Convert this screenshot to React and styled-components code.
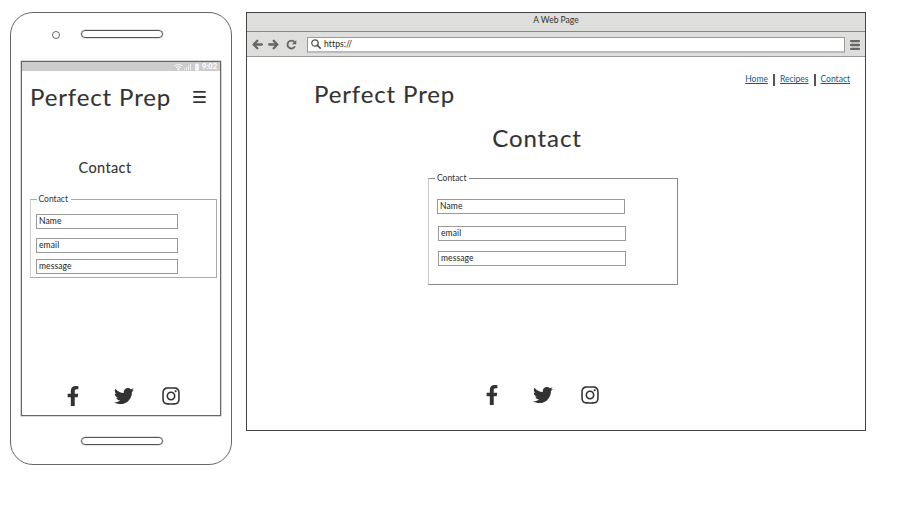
import React from "react";
import styled, { createGlobalStyle } from "styled-components";
import { FaFacebookF, FaTwitter, FaInstagram } from "react-icons/fa";

const GlobalStyle = createGlobalStyle`
  * { box-sizing: border-box; }
  body {
    margin: 0;
    background: #fff;
    color: #333;
    font-family: Lato, "Liberation Sans", sans-serif;
  }
  svg { display: block; flex: none; }
`;

const Page = styled.main`
  width: 912px;
  height: 511px;
  padding: 12px 0 0 10px;
  display: flex;
  align-items: flex-start;
  gap: 14px;
  overflow: hidden;
`;

const Phone = styled.section`
  width: 222px;
  height: 453px;
  border: 1px solid #666;
  border-radius: 23px;
  display: flex;
  flex-direction: column;
  padding: 0 10px;
`;

const PhoneTop = styled.div`
  height: 48px;
  padding: 17px 0 0 31px;
  display: flex;
  align-items: flex-start;
  gap: 20px;
`;

const Camera = styled.span`
  width: 8px;
  height: 8px;
  margin-top: 1px;
  margin-right: 1px;
  border: 1.4px solid #666;
  border-radius: 50%;
`;

const Slot = styled.span`
  width: 82px;
  height: 8px;
  border: 1px solid #555;
  border-radius: 4px;
  box-shadow: 0 0 0 0.3px #888;
`;

const BottomSlot = styled(Slot)`
  margin-left: 1px;
`;

const Screen = styled.div`
  height: 355px;
  border: 1px solid #666;
  box-shadow: 0 0 0 0.4px #999;
  display: flex;
  flex-direction: column;
`;

const StatusBar = styled.div`
  height: 9px;
  flex: none;
  background: #ccc;
  display: flex;
  justify-content: flex-end;
  align-items: center;
  padding-right: 3px;
  gap: 2px;
  color: #fff;
  font-size: 7.5px;
  line-height: 9px;
  font-weight: 900;
`;

const PhoneHeader = styled.header`
  display: flex;
  justify-content: space-between;
  align-items: center;
  height: 34px;
  margin-top: 9px;
  padding: 0 14px 0 8px;
`;

const Brand = styled.div`
  font-size: 24px;
  line-height: 34px;
  letter-spacing: 0.88px;
  white-space: nowrap;
  -webkit-text-stroke: 0.1px #333;
`;

const Title = styled.h1`
  margin: 0;
  font-weight: 400;
  text-align: center;
  font-size: ${(p) => (p.$small ? 14.5 : 24)}px;
  line-height: ${(p) => (p.$small ? 20 : 34)}px;
  letter-spacing: ${(p) => (p.$small ? 0.4 : 0.9)}px;
  -webkit-text-stroke: 0.1px #333;
`;

const PhoneTitle = styled(Title)`
  margin: 44px 0 0 -32px;
`;

const FormGroup = styled.form`
  width: ${(p) => p.$w}px;
  height: ${(p) => p.$h}px;
  border: 1px solid ${(p) => (p.$soft ? "#aaa" : "#888")};
  border-left-color: #ccc;
  display: flex;
  flex-direction: column;
  align-items: flex-start;
`;

const Legend = styled.div`
  height: 12px;
  margin: -7px 0 0 6px;
  padding: 0 3px 0 2px;
  background: #fff;
  font-size: 8.5px;
  line-height: 12px;
`;

const Field = styled.div`
  width: ${(p) => p.$w}px;
  height: 15px;
  margin: ${(p) => p.$top}px 0 0 ${(p) => p.$left}px;
  border: 1px solid #999;
  padding-left: 2px;
  font-size: 8.5px;
  line-height: 13px;
  letter-spacing: 0.1px;
  color: #222;
`;

const SocialRow = styled.footer`
  display: flex;
  align-items: center;
  height: 20px;
  color: #333;
`;

const PhoneSocial = styled(SocialRow)`
  margin: auto 0 9px 41px;
`;

const SocialIcon = styled.span`
  width: ${(p) => p.$w}px;
  display: flex;
  justify-content: flex-start;
`;

const PhoneBottom = styled.div`
  display: flex;
  justify-content: center;
  padding-top: 21px;
`;

const Browser = styled.section`
  width: 620px;
  height: 419px;
  border: 1px solid #444;
  display: flex;
  flex-direction: column;
`;

const TitleBar = styled.div`
  height: 19px;
  background: #dededc;
  border-bottom: 1px solid #888;
  text-align: center;
  font-size: 8.5px;
  line-height: 15px;
`;

const Toolbar = styled.div`
  height: 25px;
  background: #dededc;
  border-bottom: 1px solid #999;
  display: flex;
  align-items: center;
  padding: 1px 5px 0;
`;

const NavButtons = styled.div`
  display: flex;
  align-items: center;
  gap: 5px;
  width: 55px;
`;

const ReloadSlot = styled.span`
  margin-left: 2px;
`;

const Address = styled.div`
  width: 538px;
  height: 16px;
  background: #fff;
  border: 1px solid #999;
  border-bottom: 2px solid #bbb;
  display: flex;
  align-items: center;
  gap: 3px;
  padding-left: 3px;
  margin-right: 5px;
  font-size: 8.5px;
  letter-spacing: 0.12px;
  color: #222;
`;

const BrowserHeader = styled.header`
  display: flex;
  justify-content: space-between;
  padding: 20px 15px 0 67px;
`;

const Nav = styled.nav`
  display: flex;
  height: 12px;
  margin-top: -4px;
  font-size: 8.5px;
  line-height: 12px;
`;

const NavLink = styled.a`
  color: #14588f;
  text-decoration: underline;
  text-underline-offset: 1px;
`;

const Divider = styled.span`
  width: 2px;
  height: 12px;
  margin: 1px 5px 0;
  background: #555;
`;

const BrowserTitle = styled(Title)`
  margin: 10px 38px 0 0;
`;

const FormHolder = styled.div`
  padding: 23px 0 0 181px;
`;

const BrowserSocial = styled(SocialRow)`
  margin: auto 0 25px 235px;
`;

function Arrow({ flip }) {
  return (
    <svg width="11" height="11" viewBox="0 0 11 11">
      <path
        d={flip ? "M1.2 5.5H9M5.7 1.8L9.4 5.5L5.7 9.2" : "M9.8 5.5H2M5.3 1.8L1.6 5.5L5.3 9.2"}
        fill="none" stroke="#666" strokeWidth="2.3" strokeLinecap="round" strokeLinejoin="round"
      />
    </svg>
  );
}

function Reload() {
  return (
    <svg width="11" height="11" viewBox="0 0 12 12">
      <path d="M9.2 3.2A4.3 4.3 0 1 0 9.8 8" fill="none" stroke="#666" strokeWidth="2" />
      <path d="M11.2 1v4.8H6.4z" fill="#666" />
    </svg>
  );
}

function Magnifier() {
  return (
    <svg width="10" height="10" viewBox="0 0 10 10">
      <circle cx="4" cy="4" r="3.2" fill="none" stroke="#555" strokeWidth="1.3" />
      <path d="M6.4 6.4L9.2 9.2" stroke="#555" strokeWidth="1.7" strokeLinecap="round" />
    </svg>
  );
}

function Bars({ width, height, weight, color }) {
  return (
    <svg width={width} height={height} viewBox={`0 0 ${width} ${height}`}>
      {[weight / 2, height / 2, height - weight / 2].map((y) => (
        <path key={y} d={`M1 ${y}H${width - 1}`} stroke={color} strokeWidth={weight} strokeLinecap="round" />
      ))}
    </svg>
  );
}

function StatusIcons() {
  return (
    <svg width="26" height="8" viewBox="0 0 26 8">
      <g fill="none" stroke="#fff" strokeWidth=".9">
        <path d="M.5 3Q4.5-.2 8.5 3M2 4.5Q4.5 2.4 7 4.5" />
      </g>
      <circle cx="4.5" cy="6.2" r="1" fill="#fff" />
      <path d="M10 5.5h1V7h-1zM12 4.2h1V7h-1zM14 2.6h1V7h-1zM16 1h1v6h-1z" fill="#f2f2f2" />
      <path d="M21.2 1.2h1V.4h1.6v.8h1v6.3h-3.6z" fill="#fff" />
      <path d="M22.8 2.4v3.2" stroke="#ccc" strokeWidth=".6" />
    </svg>
  );
}

function SocialIcons() {
  return (
    <>
      <SocialIcon $w={51}><FaFacebookF size={20} /></SocialIcon>
      <SocialIcon $w={47}><FaTwitter size={20} /></SocialIcon>
      <SocialIcon $w={20}><FaInstagram size={20} /></SocialIcon>
    </>
  );
}

const PhoneFormHolder = styled.div`
  padding: 21px 0 0 8px;
  margin-left: -0.5px;
`;

function PhoneForm() {
  return (
    <PhoneFormHolder>
      <FormGroup $w={187} $h={79} $soft>
        <Legend>Contact</Legend>
        <Field $w={142} $top={9} $left={5.5}>Name</Field>
        <Field $w={142} $top={9} $left={5.5}>email</Field>
        <Field $w={142} $top={6} $left={5.5}>message</Field>
      </FormGroup>
    </PhoneFormHolder>
  );
}

export default function App() {
  return (
    <>
      <GlobalStyle />
      <Page>
        <Phone>
          <PhoneTop>
            <Camera />
            <Slot />
          </PhoneTop>
          <Screen>
            <StatusBar>
              <StatusIcons />
              <span>9:02</span>
            </StatusBar>
            <PhoneHeader>
              <Brand>Perfect Prep</Brand>
              <Bars width={13} height={12} weight={1.8} color="#333" />
            </PhoneHeader>
            <PhoneTitle $small>Contact</PhoneTitle>
            <PhoneForm />
            <PhoneSocial><SocialIcons /></PhoneSocial>
          </Screen>
          <PhoneBottom><BottomSlot /></PhoneBottom>
        </Phone>
        <Browser>
          <TitleBar>A Web Page</TitleBar>
          <Toolbar>
            <NavButtons>
              <Arrow />
              <Arrow flip />
              <ReloadSlot><Reload /></ReloadSlot>
            </NavButtons>
            <Address><Magnifier />https://</Address>
            <Bars width={10} height={10} weight={2.3} color="#666" />
          </Toolbar>
          <BrowserHeader>
            <Brand>Perfect Prep</Brand>
            <Nav>
              <NavLink>Home</NavLink>
              <Divider />
              <NavLink>Recipes</NavLink>
              <Divider />
              <NavLink>Contact</NavLink>
            </Nav>
          </BrowserHeader>
          <BrowserTitle>Contact</BrowserTitle>
          <FormHolder>
            <FormGroup $w={250} $h={107}>
              <Legend>Contact</Legend>
              <Field $w={188} $top={15} $left={8}>Name</Field>
              <Field $w={188} $top={12} $left={9}>email</Field>
              <Field $w={188} $top={10} $left={9}>message</Field>
            </FormGroup>
          </FormHolder>
          <BrowserSocial><SocialIcons /></BrowserSocial>
        </Browser>
      </Page>
    </>
  );
}
